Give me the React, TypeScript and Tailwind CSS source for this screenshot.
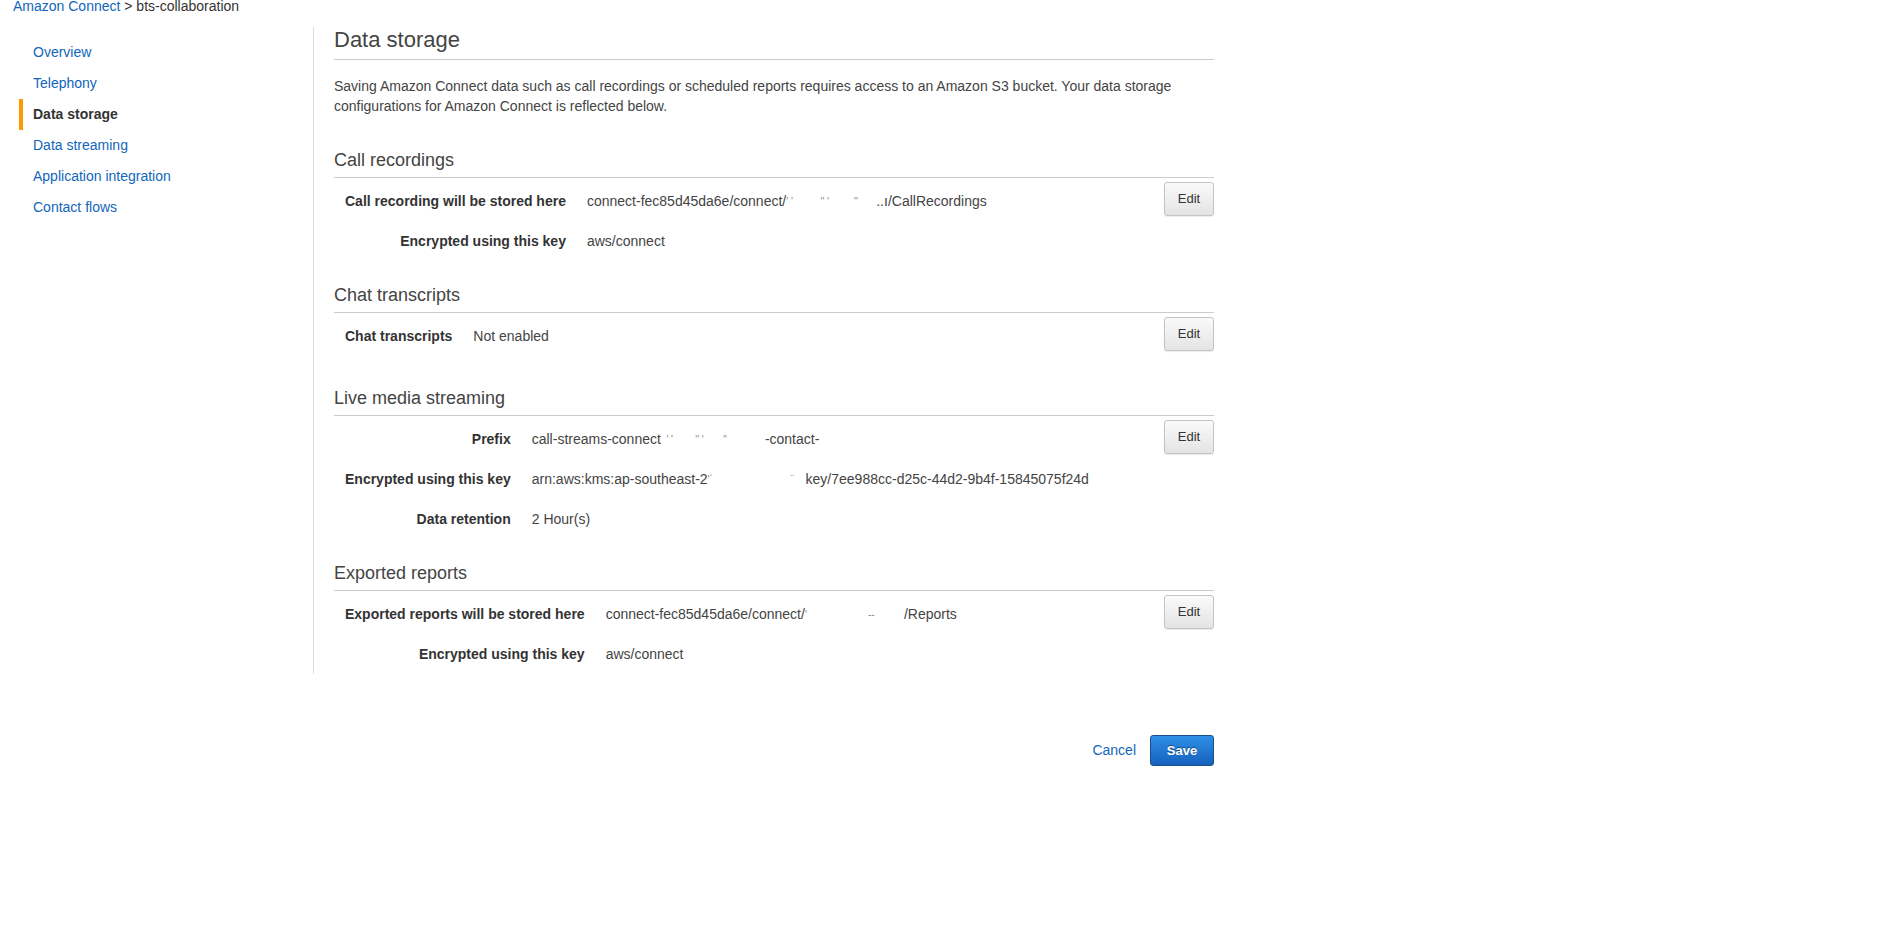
import type { ReactNode } from "react";

const navItems = [
  "Overview",
  "Telephony",
  "Data storage",
  "Data streaming",
  "Application integration",
  "Contact flows"
];

// faint leftovers of a redacted id
function Redacted({ width, marks }: { width: string; marks: string }) {
  return (
    <span className={`inline-block whitespace-pre text-[10px] text-[#888] ${width}`}>{marks}</span>
  );
}

type Row = { label: string; value: ReactNode };
type Section = { title: string; rows: Row[]; extra?: boolean };

const sections: Section[] = [
  {
    title: "Call recordings",
    rows: [
      {
        label: "Call recording will be stored here",
        value: (
          <>
            connect-fec85d45da6e/connect/
            <Redacted width="w-[90px]" marks={"' '          '' '         ''"} />
            ..ı/CallRecordings
          </>
        )
      },
      { label: "Encrypted using this key", value: "aws/connect" }
    ]
  },
  {
    title: "Chat transcripts",
    extra: true,
    rows: [{ label: "Chat transcripts", value: "Not enabled" }]
  },
  {
    title: "Live media streaming",
    rows: [
      {
        label: "Prefix",
        value: (
          <>
            call-streams-connect
            <Redacted width="w-[104px]" marks={"  ' '        '' '       ''"} />
            -contact-
          </>
        )
      },
      {
        label: "Encrypted using this key",
        value: (
          <>
            arn:aws:kms:ap-southeast-2
            <Redacted width="w-[98px]" marks={"'´                            ¨"} />
            key/7ee988cc-d25c-44d2-9b4f-15845075f24d
          </>
        )
      },
      { label: "Data retention", value: "2 Hour(s)" }
    ]
  },
  {
    title: "Exported reports",
    rows: [
      {
        label: "Exported reports will be stored here",
        value: (
          <>
            connect-fec85d45da6e/connect/
            <Redacted width="w-[99px]" marks={"'                      --"} />
            /Reports
          </>
        )
      },
      { label: "Encrypted using this key", value: "aws/connect" }
    ]
  }
];

function EditButton() {
  return (
    <button
      type="button"
      className="h-[34px] w-[50px] rounded-[3px] border border-[#c4c4c4] bg-gradient-to-b from-[#fafafa] to-[#e4e4e4] text-[13px] text-[#333] shadow-[0_1px_1px_rgba(0,0,0,0.08)]"
    >
      Edit
    </button>
  );
}

function StorageSection({ section, first }: { section: Section; first: boolean }) {
  return (
    <section className={`${first ? "mt-[32px]" : "mt-[22px]"} ${section.extra ? "pb-[8px]" : ""}`}>
      <h2 className="border-b border-[#cccccc] pb-[5px] text-[18px] leading-[24px] text-[#444]">
        {section.title}
      </h2>
      <div className="mt-[3px] grid grid-cols-[auto_1fr_auto]">
        {section.rows.map((row, i) => (
          <div key={row.label + i} className="contents">
            <div className="flex h-[40px] items-center justify-end pl-[11px] pr-[10px] font-bold text-[#333]">
              {row.label}
            </div>
            <div className="flex h-[40px] items-center whitespace-nowrap pl-[11px] text-[#444]">
              {row.value}
            </div>
            <div className="flex h-[40px] items-start justify-end pt-[1px]">
              {i === 0 && <EditButton />}
            </div>
          </div>
        ))}
      </div>
    </section>
  );
}

export default function App() {
  return (
    <div className="min-h-screen bg-white px-[13px] font-['Liberation_Sans',Arial,sans-serif] text-[14px] text-[#444]">
      <div className="leading-[12px]">
        <span className="text-[#1166bb]">Amazon Connect</span>
        <span className="text-[#333]"> &gt; bts-collaboration</span>
      </div>

      <div className="mt-[15px] flex">
        <aside className="w-[300px] shrink-0">
          <nav className="ml-[6px] mt-[10px] flex flex-col">
            {navItems.map((item) => {
              const active = item === "Data storage";
              return (
                <a
                  key={item}
                  href="#"
                  className={`flex h-[31px] items-center border-l-4 pl-[10px] ${
                    active ? "border-[#ff9900] font-bold text-[#333]" : "border-transparent text-[#1166bb]"
                  }`}
                >
                  {item}
                </a>
              );
            })}
          </nav>
        </aside>

        <main className="w-[901px] shrink-0 border-l border-[#dddddd] pl-[20px]">
          <h1 className="border-b border-[#cccccc] pb-[6px] text-[22px] leading-[26px] text-[#444]">
            Data storage
          </h1>
          <p className="mt-[16px] leading-[20px] text-[#444]">
            Saving Amazon Connect data such as call recordings or scheduled reports requires access to an Amazon S3
            bucket. Your data storage configurations for Amazon Connect is reflected below.
          </p>
          {sections.map((section, i) => (
            <StorageSection key={section.title} section={section} first={i === 0} />
          ))}
        </main>
      </div>

      <div className="mt-[61px] flex w-[1201px] items-center justify-end gap-[14px]">
        <a href="#" className="text-[#1166bb]">
          Cancel
        </a>
        <button
          type="button"
          className="h-[31px] w-[64px] rounded-[3px] border border-[#1a4f8e] bg-gradient-to-b from-[#2f8ee6] to-[#1662bd] text-[13px] font-bold text-white [text-shadow:0_-1px_0_rgba(0,0,0,0.45)]"
        >
          Save
        </button>
      </div>
    </div>
  );
}
